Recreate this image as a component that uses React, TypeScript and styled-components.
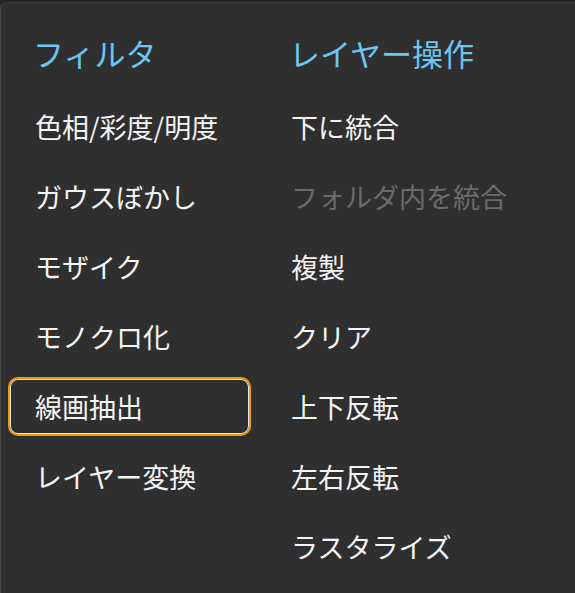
import styled, { createGlobalStyle } from 'styled-components'

const GlobalStyle = createGlobalStyle`
  html, body {
    margin: 0;
    padding: 0;
    background: #262626;
  }
  body {
    font-family: 'Noto Sans CJK JP', 'Noto Sans', sans-serif;
  }
`

type Item = { label: string; disabled?: boolean; focused?: boolean }

const filters: Item[] = [
  { label: '色相/彩度/明度' },
  { label: 'ガウスぼかし' },
  { label: 'モザイク' },
  { label: 'モノクロ化' },
  { label: '線画抽出', focused: true },
  { label: 'レイヤー変換' },
]

const layerOps: Item[] = [
  { label: '下に統合' },
  { label: 'フォルダ内を統合', disabled: true },
  { label: '複製' },
  { label: 'クリア' },
  { label: '上下反転' },
  { label: '左右反転' },
  { label: 'ラスタライズ' },
]

const Column = ({ title, items }: { title: string; items: Item[] }) => (
  <StyledColumn>
    <StyledHeader>{title}</StyledHeader>
    {items.map((item) => (
      <StyledItem key={item.label} $disabled={item.disabled} $focused={item.focused}>
        {item.label}
      </StyledItem>
    ))}
  </StyledColumn>
)

export default function App() {
  return (
    <>
      <GlobalStyle />
      <StyledPanel>
        <Column title="フィルタ" items={filters} />
        <Column title="レイヤー操作" items={layerOps} />
      </StyledPanel>
    </>
  )
}

const StyledPanel = styled.div`
  display: grid;
  grid-template-columns: 243px 243px;
  column-gap: 13px;
  box-sizing: border-box;
  width: 575px;
  height: 593px;
  margin-top: 2px;
  padding: 21px 0 0 7px;
  background: #2f2f2f;
  border-left: 1px solid #454545;
  border-top: 1px solid #3a3a3a;
  border-top-left-radius: 6px;
`

const StyledColumn = styled.div`
  display: flex;
  flex-direction: column;
  gap: 11px;
`

const StyledHeader = styled.div`
  height: 56px;
  display: flex;
  align-items: center;
  padding-left: 25px;
  font-size: 31px;
  white-space: nowrap;
  color: #6cc6ef;
  margin-bottom: 6px;
`

const StyledItem = styled.div<{ $disabled?: boolean; $focused?: boolean }>`
  box-sizing: border-box;
  height: 59px;
  display: flex;
  align-items: center;
  padding-left: 25px;
  font-size: 27px;
  white-space: nowrap;
  border-radius: 10px;
  color: ${({ $disabled }) => ($disabled ? '#6b6b6b' : '#f4f4f4')};
  border: ${({ $focused }) => ($focused ? '2px solid #f59a00' : '2px solid transparent')};
  box-shadow: ${({ $focused }) => ($focused ? 'inset 0 0 0 1px #e8e8e8' : 'none')};
`
